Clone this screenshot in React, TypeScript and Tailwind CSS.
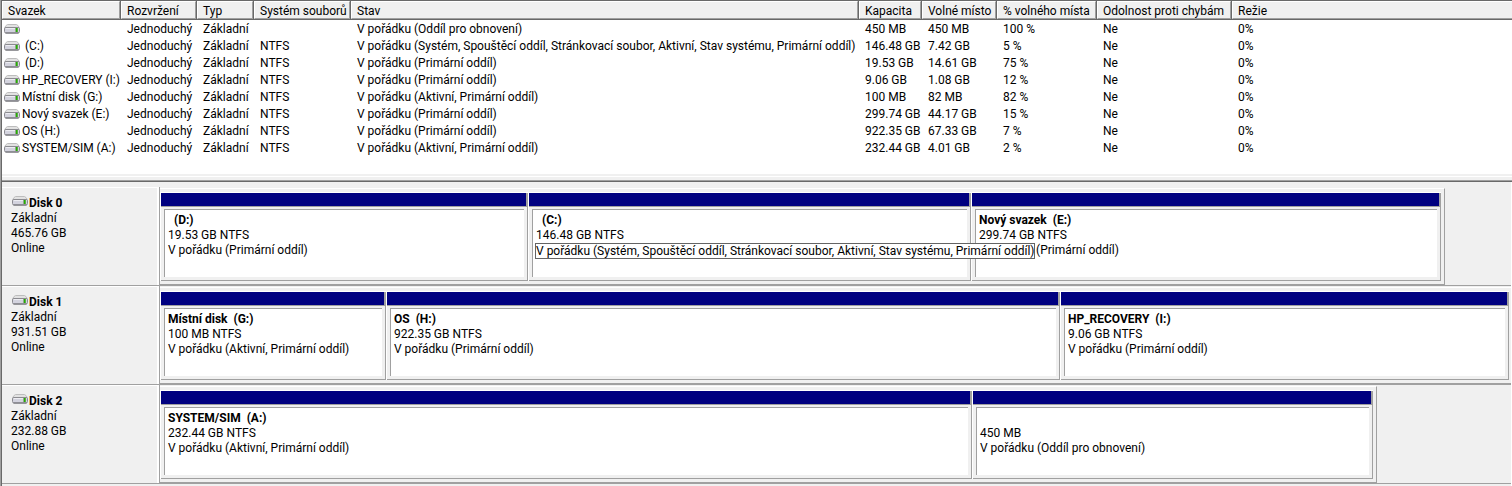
import React from "react";

type Partition = {
  name?: string;
  size: string;
  status?: string;
  weight: number;
  tip?: string;
};

type Disk = {
  name: string;
  size: string;
  width: number;
  full?: boolean;
  partitions: Partition[];
};

const columns = [
  { title: "Svazek", width: "w-[119px]" },
  { title: "Rozvržení", width: "w-[76px]" },
  { title: "Typ", width: "w-[57px]" },
  { title: "Systém souborů", width: "w-[97px]" },
  { title: "Stav", width: "w-[508px]" },
  { title: "Kapacita", width: "w-[63px]" },
  { title: "Volné místo", width: "w-[75px]" },
  { title: "% volného místa", width: "w-[100px]" },
  { title: "Odolnost proti chybám", width: "w-[135px]" },
  { title: "Režie", width: "" },
];

const systemStatus =
  "V pořádku (Systém, Spouštěcí oddíl, Stránkovací soubor, Aktivní, Stav systému, Primární oddíl)";

// name, file system, status, capacity, free, free percent
const volumes = [
  ["", "", "V pořádku (Oddíl pro obnovení)", "450 MB", "450 MB", "100 %"],
  [" (C:)", "NTFS", systemStatus, "146.48 GB", "7.42 GB", "5 %"],
  [" (D:)", "NTFS", "V pořádku (Primární oddíl)", "19.53 GB", "14.61 GB", "75 %"],
  ["HP_RECOVERY (I:)", "NTFS", "V pořádku (Primární oddíl)", "9.06 GB", "1.08 GB", "12 %"],
  ["Místní disk (G:)", "NTFS", "V pořádku (Aktivní, Primární oddíl)", "100 MB", "82 MB", "82 %"],
  ["Nový svazek (E:)", "NTFS", "V pořádku (Primární oddíl)", "299.74 GB", "44.17 GB", "15 %"],
  ["OS (H:)", "NTFS", "V pořádku (Primární oddíl)", "922.35 GB", "67.33 GB", "7 %"],
  ["SYSTEM/SIM (A:)", "NTFS", "V pořádku (Aktivní, Primární oddíl)", "232.44 GB", "4.01 GB", "2 %"],
];

const disks: Disk[] = [
  {
    name: "Disk 0",
    size: "465.76 GB",
    width: 95.12,
    partitions: [
      { name: "  (D:)", size: "19.53 GB NTFS", status: "V pořádku (Primární oddíl)", weight: 367 },
      { name: "  (C:)", size: "146.48 GB NTFS", weight: 442, tip: systemStatus },
      { name: "Nový svazek  (E:)", size: "299.74 GB NTFS", status: "V pořádku (Primární oddíl)", weight: 469 },
    ],
  },
  {
    name: "Disk 1",
    size: "931.51 GB",
    width: 100,
    full: true,
    partitions: [
      { name: "Místní disk  (G:)", size: "100 MB NTFS", status: "V pořádku (Aktivní, Primární oddíl)", weight: 225 },
      { name: "OS  (H:)", size: "922.35 GB NTFS", status: "V pořádku (Primární oddíl)", weight: 673 },
      { name: "HP_RECOVERY  (I:)", size: "9.06 GB NTFS", status: "V pořádku (Primární oddíl)", weight: 448 },
    ],
  },
  {
    name: "Disk 2",
    size: "232.88 GB",
    width: 90.08,
    partitions: [
      { name: "SYSTEM/SIM  (A:)", size: "232.44 GB NTFS", status: "V pořádku (Aktivní, Primární oddíl)", weight: 811 },
      { size: "450 MB", status: "V pořádku (Oddíl pro obnovení)", weight: 400 },
    ],
  },
];

function DriveIcon() {
  return (
    <svg width="16" height="10" viewBox="0 0 16 10" className="shrink-0" aria-hidden="true">
      <path d="M3.5 0.5h9Q14 1 15.3 3.5H0.7Q2 1 3.5 0.5z" fill="#e2e2e2" stroke="#bdbdbd" />
      <rect x="0.5" y="3.5" width="15" height="5.5" rx="1.5" fill="#d3d3de" stroke="#8b8b90" />
      <path d="M1.5 4.5h13" stroke="#ededf2" />
      <path d="M1.5 9h13" stroke="#6d6d72" />
      <rect x="11" y="4" width="3" height="4" fill="#8fa88a" />
      <rect x="12" y="4" width="1.5" height="4" fill="#25b000" />
    </svg>
  );
}

function VolumeTable() {
  return (
    <table className="w-full table-fixed border-collapse whitespace-pre text-left">
      <thead>
        <tr className="h-[21px] align-top">
          {columns.map((col) => (
            <th key={col.title} className={`group p-0 font-normal ${col.width}`}>
              <div className="h-5 border-y border-r border-[#696969] group-last:border-r-0">
                <div className="h-[18px] border border-t-white border-r-[#a0a0a0] border-b-[#a0a0a0] border-l-white bg-[#f0f0f0] pl-[5px] leading-[18px] group-last:border-r-0">
                  {col.title}
                </div>
              </div>
            </th>
          ))}
        </tr>
      </thead>
      <tbody>
        {volumes.map(([name, fs, status, capacity, free, percent], i) => (
          <tr key={i} className="h-[17px] leading-[17px]">
            <td className="p-0">
              <div className="flex h-[17px] items-start gap-[2px] pl-[2px]">
                <div className="pt-[3px] leading-none">
                  <DriveIcon />
                </div>
                <span>{name}</span>
              </div>
            </td>
            <td className="p-0 pl-[6px]">Jednoduchý</td>
            <td className="p-0 pl-[6px]">Základní</td>
            <td className="p-0 pl-[6px]">{fs}</td>
            <td className="p-0 pl-[6px]">{status}</td>
            <td className="p-0 pl-[6px]">{capacity}</td>
            <td className="p-0 pl-[6px]">{free}</td>
            <td className="p-0 pl-[6px]">{percent}</td>
            <td className="p-0 pl-[6px]">Ne</td>
            <td className="p-0 pl-[6px]">0%</td>
          </tr>
        ))}
      </tbody>
    </table>
  );
}

function PartitionBox({ part }: { part: Partition }) {
  return (
    <div className="flex min-w-0 basis-0 flex-col border-t border-l border-white" style={{ flexGrow: part.weight }}>
      <div className="h-[14px] border-r-2 border-b border-[#a0a0a0] bg-[#000080]" />
      <div className="flex-1 border-r border-b border-[#a0a0a0] pt-[2px] pr-[3px] pb-[3px] pl-[3px]">
        <div className="relative h-full border-t border-l border-[#a0a0a0] bg-white pt-[3px] pl-[3px]">
          <div className="h-[15px] font-bold">{part.name}</div>
          <div>{part.size}</div>
          {part.status && <div>{part.status}</div>}
          {part.tip && (
            <div role="tooltip" className="absolute top-[33px] left-[2px] z-10 border border-[#646464] bg-white leading-[14px]">
              {part.tip}
            </div>
          )}
        </div>
      </div>
    </div>
  );
}

function DiskRow({ disk }: { disk: Disk }) {
  return (
    <section className="flex h-[99px] border-b border-[#a0a0a0]">
      <div className="w-[157px] shrink-0 border-t border-r-2 border-white pt-[8px] pl-[9px]">
        <div className="flex gap-px pl-px">
          <DriveIcon />
          <h2 className="font-bold">{disk.name}</h2>
        </div>
        <div>Základní</div>
        <div>{disk.size}</div>
        <div>Online</div>
      </div>
      <div className="min-w-0 flex-1 border-l border-[#a0a0a0] pt-px">
        <div
          className={`flex h-[97px] border-t border-b border-t-white border-b-[#a0a0a0] pt-[3px] pb-[3px] ${disk.full ? "pr-[2px]" : "border-r border-r-[#a0a0a0] pr-[3px]"}`}
          style={{ width: `${disk.width}%` }}
        >
          {disk.partitions.map((part, i) => (
            <PartitionBox key={i} part={part} />
          ))}
        </div>
      </div>
    </section>
  );
}

export default function App() {
  return (
    <main className="overflow-hidden border-l border-[#a0a0a0] bg-[#f0f0f0] font-['Roboto','Noto_Sans',sans-serif] text-[12px] leading-[15px] whitespace-pre text-black">
      <div className="border-l border-[#696969]">
        <div className="bg-white pb-[17px]">
          <VolumeTable />
        </div>
        {/* splitter between the list and the disk map */}
        <div className="h-2 border-b border-[#696969] pt-[2px]">
          <div className="h-[5px] border-t border-b border-t-white border-b-[#a0a0a0]" />
        </div>
        <div className="border-r border-white pt-[5px] pb-[2px]">
          {disks.map((disk) => (
            <DiskRow key={disk.name} disk={disk} />
          ))}
        </div>
      </div>
    </main>
  );
}
